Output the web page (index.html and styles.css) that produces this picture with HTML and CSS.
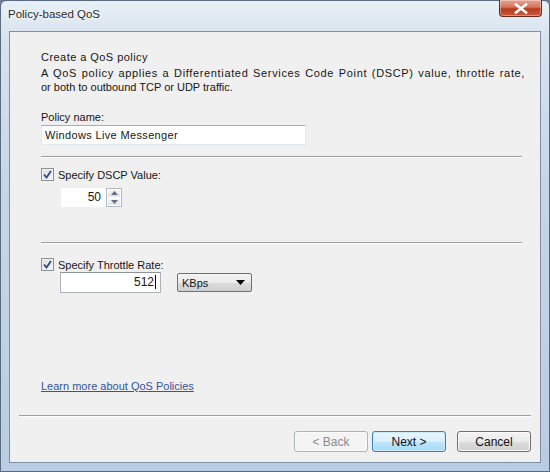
FILE: index.html
```html
<!DOCTYPE html>
<html>
<head>
  <title>Policy-based QoS</title>
  <link rel="stylesheet" href="styles.css">
</head>
<body>
  <div class="window">
    <div class="titlebar">
      <span class="title">Policy-based QoS</span>
      <button class="close" type="button">
        <svg width="14" height="11" viewBox="0 0 14 11">
          <path d="M2 1.5 L12 9.5 M12 1.5 L2 9.5" stroke="#fff" stroke-width="2.6" stroke-linecap="square"/>
        </svg>
      </button>
    </div>

    <div class="client">
      <div class="page">
        <div class="heading">Create a QoS policy</div>
        <p class="desc"><span class="desc-wide">A QoS policy applies a Differentiated Services Code Point (DSCP) value, throttle rate,</span><br>or both to outbound TCP or UDP traffic.</p>

        <div class="label">Policy name:</div>
        <div class="textbox name">Windows Live Messenger</div>

        <div class="sep"></div>

        <label class="check">
          <span class="box">
            <svg width="9" height="9" viewBox="0 0 9 9"><path d="M1 4.5 L3.5 7.5 L8 1" fill="none" stroke="#2b4a8c" stroke-width="1.8"/></svg>
          </span>
          Specify DSCP Value:
        </label>
        <div class="spinner">
          <div class="spin-value">50</div>
          <div class="spin-buttons">
            <span class="spin-btn"><svg width="7" height="4" viewBox="0 0 7 4"><path d="M0 4 L3.5 0 L7 4Z" fill="#5b6f86"/></svg></span>
            <span class="spin-btn"><svg width="7" height="4" viewBox="0 0 7 4"><path d="M0 0 L3.5 4 L7 0Z" fill="#5b6f86"/></svg></span>
          </div>
        </div>

        <div class="sep sep-two"></div>

        <label class="check check-two">
          <span class="box">
            <svg width="9" height="9" viewBox="0 0 9 9"><path d="M1 4.5 L3.5 7.5 L8 1" fill="none" stroke="#2b4a8c" stroke-width="1.8"/></svg>
          </span>
          Specify Throttle Rate:
        </label>
        <div class="rate-row">
          <div class="textbox rate">512<span class="caret"></span></div>
          <div class="combo">
            <span>KBps</span>
            <svg width="9" height="5" viewBox="0 0 9 5"><path d="M0 0 L9 0 L4.5 5Z" fill="#000"/></svg>
          </div>
        </div>

        <a class="learn" href="#">Learn more about QoS Policies</a>
      </div>

      <div class="footer">
        <div class="footer-sep"></div>
        <div class="buttons">
          <button class="btn disabled" type="button">&lt; Back</button>
          <button class="btn default" type="button">Next &gt;</button>
          <button class="btn cancel" type="button">Cancel</button>
        </div>
      </div>
    </div>
  </div>
</body>
</html>
```

FILE: styles.css
```css
* {
  margin: 0;
  padding: 0;
  box-sizing: border-box;
}

body {
  width: 550px;
  height: 472px;
  overflow: hidden;
  background: #6d7f95;
  font-family: "Liberation Sans", Arial, sans-serif;
  font-size: 11px;
  color: #161616;
}

/* glass frame */
.window {
  width: 550px;
  height: 472px;
  display: flex;
  flex-direction: column;
  padding: 0 8px 8px;
  border: 1px solid #5a6b80;
  border-radius: 6px 6px 0 0;
  background: linear-gradient(180deg, #e8eff6 0%, #d8e3ee 8%, #c6d6e7 40%, #b9cde2 100%);
}

.titlebar {
  height: 30px;
  display: flex;
  align-items: flex-start;
  justify-content: space-between;
  margin: 0 -1px 0 -1px;
}

.title {
  font-size: 11.5px;
  color: #2a2a2a;
  padding-top: 7px;
  text-shadow: 0 0 4px #fff, 0 0 6px #fff;
}

.close {
  width: 43px;
  height: 17px;
  margin-top: -1px;
  border: 1px solid #6b2a1c;
  border-top: none;
  border-radius: 0 0 4px 4px;
  background: linear-gradient(180deg, #e8a493 0%, #d4735a 45%, #b53a1e 55%, #c9593b 100%);
  display: flex;
  align-items: center;
  justify-content: center;
  box-shadow: inset 0 0 0 1px rgba(255, 255, 255, 0.35);
}

.client {
  flex: 1;
  display: flex;
  flex-direction: column;
  background: #f0f0f0;
  border: 1px solid #7f8fa3;
}

.page {
  flex: 1;
  padding: 18px 0 0 31px;
}

.heading {
  line-height: 15px;
  letter-spacing: 0.45px;
}

.desc {
  line-height: 14px;
  margin-top: 1px;
}

.desc-wide {
  letter-spacing: 0.65px;
  word-spacing: 1px;
}

.label {
  line-height: 14px;
  margin-top: 16px;
}

.textbox {
  background: #fff;
  border: 1px solid #e3e9ef;
  border-top-color: #abadb3;
  line-height: 18px;
}

.name {
  width: 265px;
  height: 20px;
  margin-top: 1px;
  padding-left: 3px;
  letter-spacing: 0.35px;
}

.sep {
  width: 481px;
  height: 2px;
  margin-top: 11px;
  border-top: 1px solid #a0a0a0;
  border-bottom: 1px solid #fff;
}

.check {
  display: flex;
  align-items: center;
  gap: 4px;
  height: 13px;
  margin-top: 10px;
}

.box {
  width: 13px;
  height: 13px;
  border: 1px solid #8e8f8f;
  background: linear-gradient(135deg, #dcdcdc 0%, #f6f6f6 100%);
  box-shadow: inset 0 0 0 1px #f4f4f4;
  display: flex;
  align-items: center;
  justify-content: center;
}

.spinner {
  display: flex;
  width: 61px;
  height: 19px;
  margin: 7px 0 0 20px;
}

.spin-value {
  flex: 1;
  background: #fff;
  text-align: right;
  line-height: 19px;
  padding-right: 5px;
  font-size: 12px;
}

.spin-buttons {
  width: 16px;
  display: flex;
  flex-direction: column;
  border: 1px solid #b2b8c0;
  background: #fff;
}

.spin-btn {
  flex: 1;
  display: flex;
  align-items: center;
  justify-content: center;
  background: linear-gradient(180deg, #f4f4f4, #e2e4e7);
  border: 1px solid #fff;
}

.sep-two {
  margin-top: 35px;
}

.check-two {
  margin-top: 14px;
}

.rate-row {
  display: flex;
  align-items: center;
  gap: 16px;
  margin: 1px 0 0 19px;
}

.rate {
  width: 101px;
  height: 21px;
  text-align: right;
  padding-right: 4px;
  border-color: #aeb4bb;
  border-top-color: #8d939b;
  font-size: 12px;
}

.caret {
  display: inline-block;
  width: 1px;
  height: 14px;
  background: #000;
  vertical-align: -3px;
  margin-left: 1px;
}

.combo {
  width: 75px;
  height: 19px;
  display: flex;
  align-items: center;
  justify-content: space-between;
  padding: 0 6px 0 4px;
  border: 1px solid #707070;
  border-radius: 2px;
  background: linear-gradient(180deg, #f3f3f3 0%, #ebebeb 50%, #dddddd 51%, #cfcfcf 100%);
}

.learn {
  display: inline-block;
  line-height: 14px;
  margin-top: 86px;
  color: #33549a;
  text-decoration: underline;
}

.footer {
  padding: 0 9px 10px;
}

.footer-sep {
  height: 2px;
  border-top: 1px solid #a0a0a0;
  border-bottom: 1px solid #fff;
}

.buttons {
  display: flex;
  justify-content: flex-end;
  gap: 4px;
  padding: 14px 0 0 0;
}

.btn {
  width: 74px;
  height: 21px;
  font-family: inherit;
  font-size: 12px;
  color: #111;
  border: 1px solid #707070;
  border-radius: 3px;
  background: linear-gradient(180deg, #f2f2f2 0%, #ebebeb 50%, #dddddd 51%, #cfcfcf 100%);
  box-shadow: inset 0 0 0 1px #fbfbfb;
}

.btn.disabled {
  color: #8b8b8b;
  border-color: #adb2b5;
  background: #f4f4f4;
}

.btn.default {
  border-color: #3c7fb1;
  background: linear-gradient(180deg, #eaf6fd 0%, #d9f0fc 50%, #bee6fd 51%, #a7d9f5 100%);
  box-shadow: inset 0 0 0 1px #cdeaf9;
}

.btn.cancel {
  margin-left: 7px;
}
```
